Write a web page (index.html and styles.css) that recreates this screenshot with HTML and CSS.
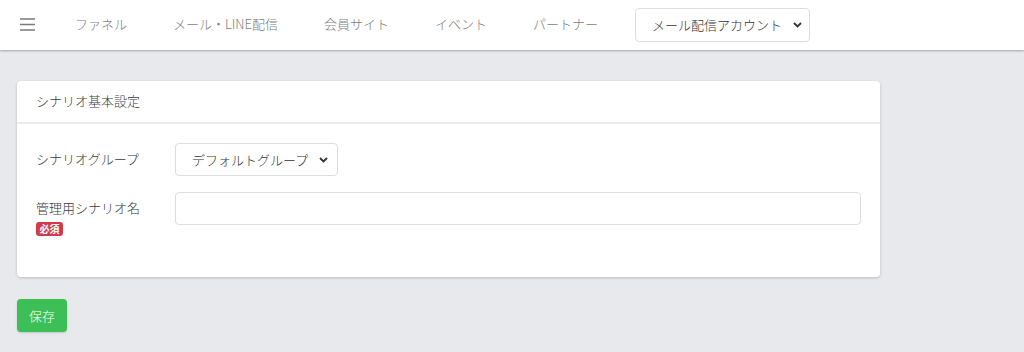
FILE: index.html
```html
<!DOCTYPE html>
<html lang="ja">
<head>
    <meta charset="UTF-8">
    <meta name="viewport" content="width=device-width, initial-scale=1.0">
    <title>シナリオ基本設定</title>
    <link rel="stylesheet" href="styles.css">
</head>
<body>
    <nav class="navbar">
        <div class="menu-toggle">
            <svg width="15" height="13" viewBox="0 0 15 13">
                <path d="M0 1h15M0 6.5h15M0 12h15" stroke="#7a7a7a" stroke-width="1.4"/>
            </svg>
        </div>
        <a class="nav-link" href="#">ファネル</a>
        <a class="nav-link" href="#">メール・LINE配信</a>
        <a class="nav-link" href="#">会員サイト</a>
        <a class="nav-link" href="#">イベント</a>
        <a class="nav-link" href="#">パートナー</a>
        <select class="account-select">
            <option>メール配信アカウント</option>
        </select>
    </nav>

    <main class="main">
        <div class="card">
            <div class="card-header">シナリオ基本設定</div>
            <div class="card-body">
                <div class="form-row">
                    <div class="form-label">シナリオグループ</div>
                    <select class="group-select">
                        <option>デフォルトグループ</option>
                    </select>
                </div>
                <div class="form-row">
                    <div class="form-label">
                        管理用シナリオ名
                        <span class="badge-required">必須</span>
                    </div>
                    <input type="text" class="text-input">
                </div>
            </div>
        </div>
        <button class="btn-save">保存</button>
    </main>
</body>
</html>
```

FILE: styles.css
```css
body {
    margin: 0;
    background-color: #e8e9ed;
    font-family: "Noto Sans CJK JP", "Noto Sans", sans-serif;
    font-size: 13px;
    font-weight: 300;
    color: #3a3a3a;
}
.navbar {
    display: flex;
    align-items: center;
    height: 50px;
    background-color: #fff;
    box-shadow: 0 1px 2px rgba(0, 0, 0, 0.3);
}
.menu-toggle {
    width: 32px;
    padding-left: 20px;
    display: flex;
    align-items: center;
    margin-top: -1px;
}
.nav-link {
    padding: 0 23px;
    color: #7c7c7c;
    text-decoration: none;
    line-height: 50px;
    margin-top: -2px;
}
.account-select,
.group-select {
    appearance: none;
    -webkit-appearance: none;
    font-family: inherit;
    font-size: 13px;
    font-weight: 300;
    color: #333;
    background-color: #fff;
    background-image: url("data:image/svg+xml;utf8,<svg xmlns='http://www.w3.org/2000/svg' width='9' height='6' viewBox='0 0 9 6'><path d='M1 1l3.5 3.5L8 1' fill='none' stroke='%23333' stroke-width='1.8'/></svg>");
    background-repeat: no-repeat;
    border: 1px solid #dcdde1;
    border-radius: 4px;
}
.account-select {
    width: 175px;
    height: 34px;
    margin-left: 14px;
    margin-top: -1px;
    padding: 0 16px;
    background-position: right 7px center;
}
.main {
    padding: 31px 17px 20px;
}
.card {
    width: 863px;
    background-color: #fff;
    border-radius: 4px;
    box-shadow: 0 1px 3px rgba(0, 0, 0, 0.2);
}
.card-header {
    height: 41px;
    line-height: 40px;
    padding: 0 19px;
    border-bottom: 2px solid #e9ebee;
}
.card-body {
    padding: 19px 19px 41px;
}
.form-row {
    display: flex;
    align-items: flex-start;
    margin-bottom: 16px;
}
.form-row:last-child {
    margin-bottom: 0;
}
.form-label {
    width: 139px;
    line-height: 30px;
    padding-top: 1px;
}
.badge-required {
    display: block;
    width: 27px;
    height: 14px;
    line-height: 14px;
    margin-top: -1px;
    border-radius: 3px;
    background-color: #d23a4c;
    color: #fff;
    font-size: 10px;
    font-weight: bold;
    text-align: center;
}
.group-select {
    width: 163px;
    height: 33px;
    padding: 0 16px;
    background-position: right 9px center;
}
.text-input {
    width: 686px;
    height: 33px;
    box-sizing: border-box;
    border: 1px solid #dcdde1;
    border-radius: 4px;
    padding: 0 12px;
    font-family: inherit;
    font-size: 13px;
}
.btn-save {
    margin-top: 22px;
    width: 50px;
    height: 33px;
    border: none;
    border-radius: 4px;
    background-color: #3dbf57;
    color: #fff;
    font-family: inherit;
    font-size: 13px;
    font-weight: 300;
    box-shadow: 0 1px 2px rgba(0, 0, 0, 0.15);
}
```
